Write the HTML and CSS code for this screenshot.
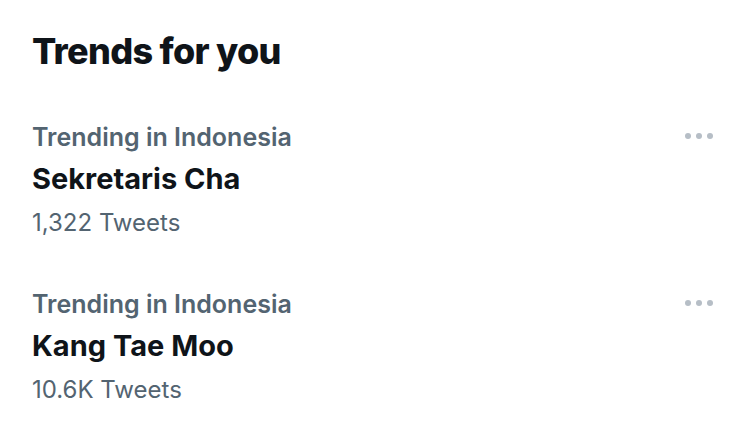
FILE: index.html
```html
<!DOCTYPE html>
<html lang="en">
<head>
<meta charset="utf-8">
<title>Trends for you</title>
<link rel="stylesheet" href="styles.css">
</head>
<body>
<section class="trends">
  <h2 class="trends-title">Trends for you</h2>
  <div class="trend">
    <div class="trend-body">
      <div class="trend-context">Trending in Indonesia</div>
      <div class="trend-name">Sekretaris Cha</div>
      <div class="trend-count">1,322 Tweets</div>
    </div>
    <div class="trend-more"><span></span><span></span><span></span></div>
  </div>
  <div class="trend">
    <div class="trend-body">
      <div class="trend-context">Trending in Indonesia</div>
      <div class="trend-name">Kang Tae Moo</div>
      <div class="trend-count">10.6K Tweets</div>
    </div>
    <div class="trend-more"><span></span><span></span><span></span></div>
  </div>
</section>
</body>
</html>
```
FILE: styles.css
```css
html, body {
  margin: 0;
  background: #ffffff;
}

body {
  font-family: Inter, "Noto Sans", "Liberation Sans", sans-serif;
  color: #0f1419;
}

.trends {
  padding: 27px 37px 0 32px;
}

.trends-title {
  margin: 0;
  font-size: 36px;
  font-weight: 800;
  line-height: 48px;
  letter-spacing: -0.7px;
}

.trend {
  display: flex;
  justify-content: space-between;
  align-items: flex-start;
  padding-top: 44px;
}

.trend + .trend {
  padding-top: 43px;
}

.trend-context {
  font-size: 25px;
  font-weight: 600;
  line-height: 36px;
  color: #536471;
}

.trend-name {
  font-size: 29px;
  font-weight: 700;
  line-height: 48px;
}

.trend-count {
  font-size: 24px;
  font-weight: 400;
  line-height: 40px;
  color: #536471;
}

.trend-more {
  display: flex;
  gap: 5px;
  margin-top: 14px;
}

.trend-more span {
  width: 6px;
  height: 6px;
  border-radius: 50%;
  background: #b6bec6;
}
```
